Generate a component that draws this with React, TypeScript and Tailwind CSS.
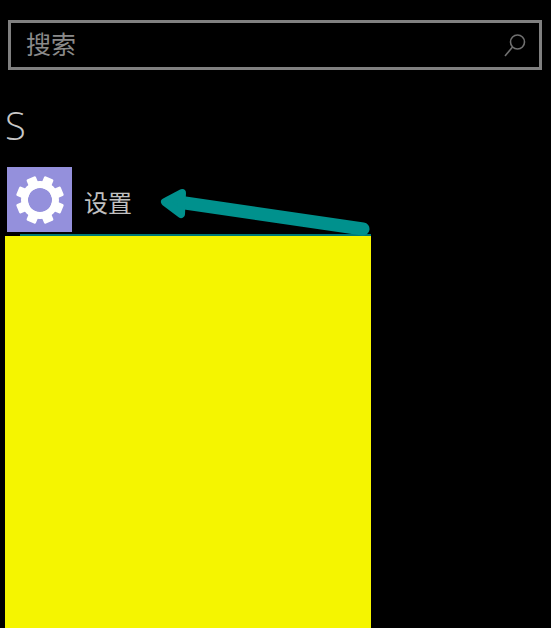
import React from "react";

const cjk = { fontFamily: '"Noto Sans CJK SC", sans-serif' };

function Gear() {
  const teeth = Array.from({ length: 8 }, (_, i) => i * 45 + 22.5);
  return (
    <svg width="48" height="48" viewBox="0 0 48 48">
      {teeth.map((a) => (
        <rect key={a} x="19" y="0" width="10" height="12" rx="1.5" fill="#fff" transform={`rotate(${a} 24 24)`} />
      ))}
      <circle cx="24" cy="24" r="15.5" fill="none" stroke="#fff" strokeWidth="7" />
    </svg>
  );
}

export default function App() {
  return (
    <div className="relative h-[628px] w-[551px] overflow-hidden bg-black">
      <div className="pt-5 pl-2 pr-[9px]">
        <div className="flex h-[50px] items-center justify-between border-[3px] border-[#808080] pl-[15px] pr-3">
          <span className="-mt-[3px] text-[25px] leading-none text-[#8a8a8a]" style={cjk}>搜索</span>
          <svg width="24" height="24" viewBox="0 0 24 24" fill="none" stroke="#707070" strokeWidth="1.6">
            <circle cx="14.5" cy="9" r="7" />
            <path d="M9.5 14 L2 23" />
          </svg>
        </div>
      </div>
      <div className="mt-8 pl-[5px] text-[38px] leading-[46px] font-light text-[#c8c8c8]" style={{ fontFamily: '"Open Sans", sans-serif', fontWeight: 300 }}>S</div>
      <div className="mt-[19px] flex items-center pl-[7px]">
        <div className="flex h-[65px] w-[65px] items-center justify-center bg-[#9490dc]">
          <Gear />
        </div>
        <span className="mt-1 ml-3 text-2xl leading-none text-[#c0c0c0]" style={cjk}>设置</span>
      </div>
      <div className="mt-[2px] ml-5 h-[2px] w-[351px] bg-[#007a76]" />
      <div className="ml-[5px] h-[392px] w-[366px] bg-[#f5f500]" />
      <svg className="absolute left-[150px] top-[175px]" width="240" height="61" viewBox="0 0 240 61" fill="none">
        <path d="M35 28 L213 54" stroke="#00918d" strokeWidth="13" strokeLinecap="round" />
        <path d="M32 18 L15 27 L31 39 Z" fill="#00918d" stroke="#00918d" strokeWidth="8" strokeLinejoin="round" />
      </svg>
    </div>
  );
}
